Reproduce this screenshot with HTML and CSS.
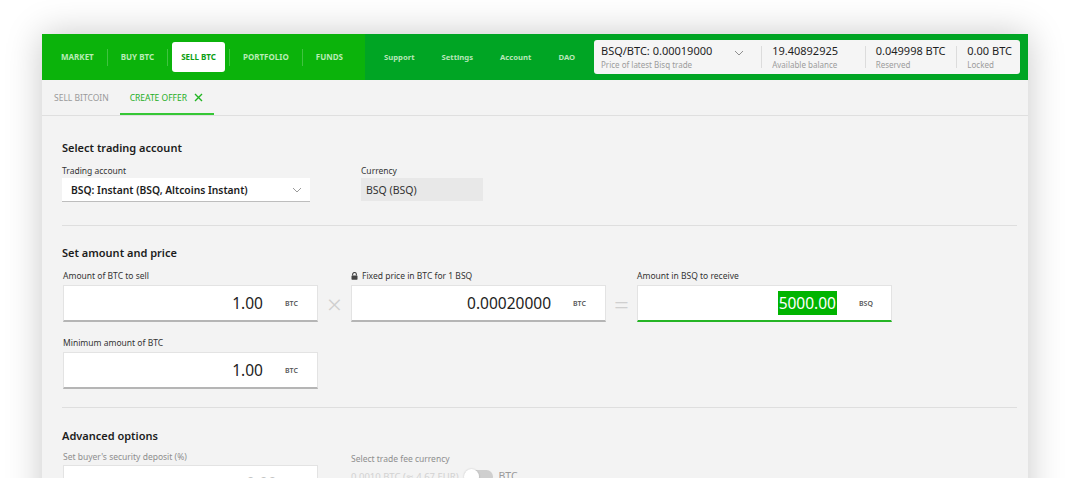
FILE: index.html
```html
<!DOCTYPE html>
<html>
<head>
<meta charset="utf-8">
<link rel="stylesheet" href="styles.css">
</head>
<body>
<div class="stage">
  <div class="window">
    <header class="topbar">
      <nav class="mainnav">
        <span class="nav-item">MARKET</span>
        <span class="nav-sep"></span>
        <span class="nav-item">BUY BTC</span>
        <span class="nav-sep"></span>
        <span class="nav-item active">SELL BTC</span>
        <span class="nav-sep"></span>
        <span class="nav-item">PORTFOLIO</span>
        <span class="nav-sep"></span>
        <span class="nav-item">FUNDS</span>
      </nav>
      <div class="secnav-wrap">
        <nav class="secnav">
          <span>Support</span>
          <span>Settings</span>
          <span>Account</span>
          <span>DAO</span>
        </nav>
        <div class="balances">
          <div class="bal bal-price">
            <div class="bal-text">
              <div class="bal-value">BSQ/BTC: 0.00019000</div>
              <div class="bal-label">Price of latest Bisq trade</div>
            </div>
            <svg class="chev" width="10" height="6" viewBox="0 0 10 6"><path d="M1 1 L5 5 L9 1" fill="none" stroke="#8f8f8f" stroke-width="1"/></svg>
          </div>
          <span class="bal-sep"></span>
          <div class="bal bal-avail">
            <div class="bal-value">19.40892925</div>
            <div class="bal-label">Available balance</div>
          </div>
          <span class="bal-sep"></span>
          <div class="bal bal-res">
            <div class="bal-value">0.049998 BTC</div>
            <div class="bal-label">Reserved</div>
          </div>
          <span class="bal-sep"></span>
          <div class="bal bal-lock">
            <div class="bal-value">0.00 BTC</div>
            <div class="bal-label">Locked</div>
          </div>
        </div>
      </div>
    </header>

    <div class="tabs">
      <div class="tab">SELL BITCOIN</div>
      <div class="tab tab-active">CREATE OFFER
        <svg class="tab-close" width="9" height="9" viewBox="0 0 9 9"><path d="M1 1 L8 8 M8 1 L1 8" stroke="#22b522" stroke-width="1.4" fill="none"/></svg>
      </div>
    </div>

    <main class="content">
      <section class="section sec-account">
        <h2 class="sec-title">Select trading account</h2>
        <div class="row">
          <div class="field field-account">
            <label class="lbl">Trading account</label>
            <div class="select">
              <span>BSQ: Instant (BSQ, Altcoins Instant)</span>
              <svg width="10" height="6" viewBox="0 0 10 6"><path d="M1 1 L5 5 L9 1" fill="none" stroke="#9a9a9a" stroke-width="1"/></svg>
            </div>
          </div>
          <div class="field field-currency">
            <label class="lbl">Currency</label>
            <div class="readonly">BSQ (BSQ)</div>
          </div>
        </div>
      </section>

      <section class="section sec-amount">
        <h2 class="sec-title">Set amount and price</h2>
        <div class="row calc-row">
          <div class="field field-num">
            <label class="lbl">Amount of BTC to sell</label>
            <div class="numbox"><span class="num">1.00</span><span class="unit">BTC</span></div>
          </div>
          <div class="op op-times">×</div>
          <div class="field field-num">
            <label class="lbl"><svg class="lock" width="7" height="8" viewBox="0 0 7 8"><path d="M1.6 3.5 V2.4 a1.9 1.9 0 0 1 3.8 0 V3.5" fill="none" stroke="#444" stroke-width="1.1"/><rect x="0.5" y="3.4" width="6" height="4.3" rx="0.6" fill="#444"/></svg>Fixed price in BTC for 1 BSQ</label>
            <div class="numbox"><span class="num">0.00020000</span><span class="unit">BTC</span></div>
          </div>
          <div class="op op-eq">=</div>
          <div class="field field-num">
            <label class="lbl">Amount in BSQ to receive</label>
            <div class="numbox focused"><span class="num"><mark class="sel">5000.00</mark></span><span class="unit">BSQ</span></div>
          </div>
        </div>
        <div class="row min-row">
          <div class="field field-num">
            <label class="lbl">Minimum amount of BTC</label>
            <div class="numbox"><span class="num">1.00</span><span class="unit">BTC</span></div>
          </div>
        </div>
      </section>

      <section class="section sec-adv">
        <h2 class="sec-title">Advanced options</h2>
        <div class="row adv-row">
          <div class="field field-num">
            <label class="lbl lbl-dim">Set buyer's security deposit (%)</label>
            <div class="numbox numbox-dim"><span class="num num-dim">0.00</span></div>
          </div>
          <div class="field field-fee">
            <label class="lbl lbl-dim">Select trade fee currency</label>
            <div class="fee-row">
              <span class="fee-amt">0.0010 BTC (≈ 4.67 EUR)</span>
              <span class="toggle"><span class="knob"></span></span>
              <span class="fee-cur">BTC</span>
            </div>
          </div>
        </div>
      </section>
    </main>
  </div>
</div>
</body>
</html>
```

FILE: styles.css
```css
* { box-sizing: border-box; }
html, body {
  margin: 0;
  padding: 0;
  background: #ffffff;
  width: 1068px;
  height: 478px;
  overflow: hidden;
  font-family: "Noto Sans", "DejaVu Sans", sans-serif;
  color: #262626;
}
.stage {
  padding: 34px 40px 0 42px;
}
.window {
  width: 986px;
  height: 520px;
  background: #f3f3f3;
  box-shadow: 0 0 34px rgba(0, 0, 0, 0.22);
  display: flex;
  flex-direction: column;
}

/* top bar */
.topbar {
  height: 46px;
  display: flex;
  flex-shrink: 0;
}
.mainnav {
  width: 323px;
  background: #0bb30b;
  display: flex;
  align-items: center;
  padding-left: 10px;
}
.nav-item {
  font-size: 8px;
  font-weight: 700;
  letter-spacing: 0;
  color: #b9ecb6;
  padding: 0 9px;
  height: 30px;
  line-height: 30px;
  border-radius: 3px;
  white-space: nowrap;
}
.nav-item.active {
  background: #ffffff;
  color: #0a9e12;
}
.nav-sep {
  width: 1px;
  height: 17px;
  background: rgba(255, 255, 255, 0.22);
  margin: 0 4px;
}
.secnav-wrap {
  flex: 1;
  background: #00a524;
  display: flex;
  align-items: center;
  padding-left: 19px;
}
.secnav {
  display: flex;
  gap: 27px;
  font-size: 7.7px;
  font-weight: 700;
  color: #b7e6b9;
}
.balances {
  margin-left: auto;
  margin-right: 8px;
  height: 34px;
  width: 426px;
  background: #f5f5f5;
  border-radius: 3px;
  display: flex;
  align-items: center;
  padding: 0 8px 0 7px;
}
.bal {
  display: flex;
  flex-direction: column;
  justify-content: center;
}
.bal-price {
  flex-direction: row;
  align-items: center;
  width: 150px;
  margin-right: 1px;
}
.bal-price .chev { margin-left: auto; margin-right: 6px; margin-top: -8px; }
.bal-value {
  font-size: 11px;
  line-height: 14px;
  color: #1f1f1f;
  white-space: nowrap;
}
.bal-label {
  margin-top: 1px;
  font-size: 8px;
  line-height: 11px;
  color: #9c9c9c;
  white-space: nowrap;
}
.bal-sep {
  width: 1px;
  height: 22px;
  background: #dcdcdc;
  margin: 0 10px;
}
.bal-avail { width: 83px; }
.bal-res { width: 71px; }

/* tabs */
.tabs {
  height: 36px;
  flex-shrink: 0;
  display: flex;
  border-bottom: 1px solid #dfdfdf;
}
.tab {
  font-size: 8.5px;
  color: #9a9a9a;
  display: flex;
  align-items: center;
  padding: 0 12px;
}
.tab-active {
  color: #1eae1e;
  border-bottom: 2px solid #35c735;
  padding: 2px 11px 0 10px;
  margin-left: -1px;
}
.tab-close { margin-left: 7px; }

/* content */
.content {
  padding: 0 11px 0 20px;
}
.section {
  border-bottom: 1px solid #dedede;
}
.sec-title {
  margin: 0;
  font-size: 11px;
  font-weight: 600;
  line-height: 16px;
  color: #1c1c1c;
}
.row { display: flex; }
.lbl {
  display: flex;
  align-items: center;
  font-size: 8.5px;
  line-height: 12px;
  color: #333;
  height: 12px;
}
.lock { margin-right: 4px; }

.sec-account { padding: 24px 0 23px; }
.sec-account .sec-title { margin-bottom: 9px; }
.field-account { width: 248px; }
.field-currency { margin-left: 51px; width: 122px; }
.select {
  margin-top: 1px;
  height: 24px;
  background: #ffffff;
  border-bottom: 1px solid #bdbdbd;
  display: flex;
  align-items: center;
  justify-content: space-between;
  padding: 0 8px 0 9px;
  font-size: 10.3px;
  font-weight: 600;
  color: #1c1c1c;
}
.readonly {
  margin-top: 1px;
  height: 23px;
  background: #e8e8e8;
  display: flex;
  align-items: center;
  padding-left: 5px;
  font-size: 10.5px;
  color: #333;
}

.sec-amount { padding: 19px 0 18px; }
.sec-amount .sec-title { margin-bottom: 9px; }
.calc-row { padding-left: 1px; }
.field-num { width: 255px; }
.numbox {
  margin-top: 3px;
  height: 37px;
  background: #ffffff;
  border: 1px solid #e3e3e3;
  border-bottom: 2px solid #b5b5b5;
  display: flex;
  align-items: center;
  justify-content: flex-end;
  padding-right: 18px;
}
.numbox.focused { border-bottom-color: #25b525; }
.num {
  font-size: 15.5px;
  color: #222;
  margin-right: 22px;
}
.unit {
  font-size: 7px;
  font-weight: 600;
  color: #555;
  width: 14px;
}
.sel {
  background: #00b400;
  color: #ffffff;
  padding: 1px 1px;
}
.op {
  width: 33px;
  display: flex;
  align-items: center;
  justify-content: center;
  padding-top: 15px;
  color: #cfcfcf;
  font-size: 26px;
  font-weight: 300;
}
.op-eq { width: 31px; }
.min-row { padding-left: 1px; margin-top: 15px; }

.sec-adv { padding: 20px 0 0; border-bottom: none; }
.sec-adv .sec-title { margin-bottom: 7px; }
.adv-row { padding-left: 1px; }
.lbl-dim { color: #8e8e8e; }
.numbox-dim { margin-top: 2px; }
.num-dim { color: #c4c4c4; }
.field-fee { margin-left: 33px; padding-top: 2px; }
.fee-row {
  display: flex;
  align-items: center;
  margin-top: 4px;
  font-size: 9.5px;
}
.fee-amt { color: #d2d2d2; }
.toggle {
  margin-left: 5px;
  width: 29px;
  height: 13px;
  border-radius: 7px;
  background: #cfcfcf;
  position: relative;
}
.knob {
  position: absolute;
  left: 0;
  top: -1px;
  width: 15px;
  height: 15px;
  border-radius: 50%;
  background: #ffffff;
  box-shadow: 0 0 2px rgba(0,0,0,0.2);
}
.fee-cur { margin-left: 6px; color: #9a9a9a; font-size: 10.5px; }
```
